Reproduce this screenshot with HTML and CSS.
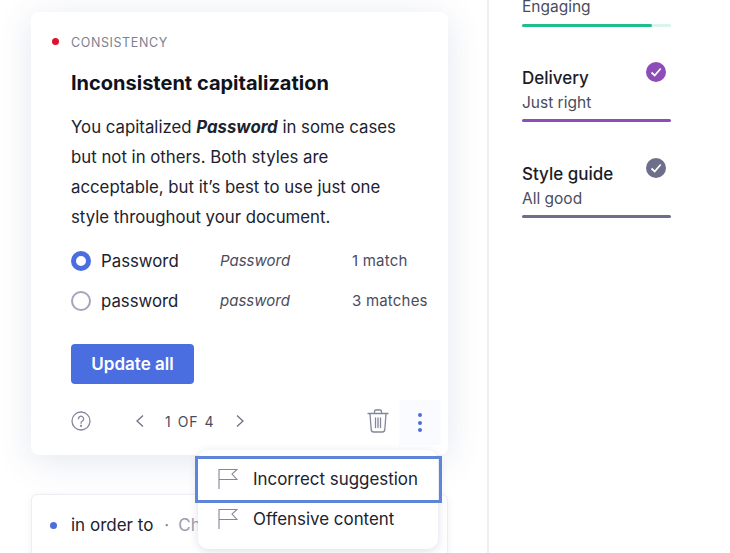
FILE: index.html
```html
<!DOCTYPE html>
<html lang="en">
<head>
<meta charset="utf-8">
<title>Inconsistent capitalization</title>
<link rel="stylesheet" href="styles.css">
</head>
<body>
<div class="page">
  <main class="feed">
    <section class="card">
      <div class="label"><span class="dot dot-red"></span><span>CONSISTENCY</span></div>
      <h1 class="title">Inconsistent capitalization</h1>
      <p class="body-text">You capitalized <b><i>Password</i></b> in some cases but not in others. Both styles are acceptable, but it’s best to use just one style throughout your document.</p>
      <div class="options">
        <div class="option">
          <span class="radio radio-on"></span><span class="opt-name">Password</span><span class="opt-ex">Password</span><span class="opt-count">1 match</span>
        </div>
        <div class="option">
          <span class="radio"></span><span class="opt-name">password</span><span class="opt-ex">password</span><span class="opt-count">3 matches</span>
        </div>
      </div>
      <button class="update">Update all</button>
      <div class="footer">
        <svg class="help" width="20" height="20" viewBox="0 0 20 20" fill="none" stroke="#85869a" stroke-width="1.3"><circle cx="10" cy="10" r="9"/><path d="M7.4 7.8a2.6 2.6 0 1 1 4 2.2c-.9.6-1.4 1-1.4 2.2" stroke-linecap="round"/><circle cx="10" cy="14.8" r=".5" fill="#85869a"/></svg>
        <svg class="chev-l" width="10" height="14" viewBox="0 0 10 14" fill="none" stroke="#6f7186" stroke-width="1.3"><path d="M8 1.5 2 7l6 5.5"/></svg>
        <span class="pager">1 OF 4</span>
        <svg class="chev-r" width="10" height="14" viewBox="0 0 10 14" fill="none" stroke="#6f7186" stroke-width="1.3"><path d="m2 1.5 6 5.5-6 5.5"/></svg>
        <svg class="trash" width="22" height="24" viewBox="0 0 22 24" fill="none" stroke="#85869a" stroke-width="1.3" stroke-linecap="round"><path d="M1 4.500h20M7.500 4V2.400c0-.8.600-1.400 1.400-1.400h4.200c.8 0 1.400.6 1.400 1.400V4M3 5l1.200 15.600c.1 1.300 1 2.400 2.400 2.400h8.800c1.400 0 2.300-1.100 2.400-2.400L19 5M8.500 9v9.500M11 9v9.500M13.500 9v9.500"/></svg>
        <div class="more"><span></span><span></span><span></span></div>
      </div>
      <div class="menu">
        <div class="menu-item menu-focus">
          <svg width="20" height="22" viewBox="0 0 20 22" fill="none" stroke="#85869a" stroke-width="1.1"><path d="M1 21V1.500h18l-5 4.500 5 5.500H1"/></svg>
          <span>Incorrect suggestion</span>
        </div>
        <div class="menu-item">
          <svg width="20" height="22" viewBox="0 0 20 22" fill="none" stroke="#85869a" stroke-width="1.1"><path d="M1 21V1.500h18l-5 4.500 5 5.500H1"/></svg>
          <span>Offensive content</span>
        </div>
      </div>
    </section>
    <section class="card-small">
      <span class="dot dot-blue"></span><span class="small-word">in order to</span><span class="small-sep">·</span><span class="small-hint">Change the wording</span>
    </section>
  </main>
  <aside class="side">
    <div class="goal goal-first">
      <div class="goal-sub">Engaging</div>
      <div class="bar bar-green"><div class="bar-fill"></div></div>
    </div>
    <div class="goal">
      <div class="goal-head"><span class="goal-title">Delivery</span>
        <svg class="goal-check" width="20" height="20" viewBox="0 0 20 20"><circle cx="10" cy="10" r="10" fill="#8e4cb8"/><path d="m5.500 10.500 3.200 3 6-7" fill="none" stroke="#fff" stroke-width="1.800"/></svg>
      </div>
      <div class="goal-sub">Just right</div>
      <div class="bar bar-purple"></div>
    </div>
    <div class="goal">
      <div class="goal-head"><span class="goal-title">Style guide</span>
        <svg class="goal-check" width="20" height="20" viewBox="0 0 20 20"><circle cx="10" cy="10" r="10" fill="#6d6f8a"/><path d="m5.500 10.500 3.200 3 6-7" fill="none" stroke="#fff" stroke-width="1.800"/></svg>
      </div>
      <div class="goal-sub">All good</div>
      <div class="bar bar-gray"></div>
    </div>
  </aside>
</div>
</body>
</html>
```

FILE: styles.css
```css
* { box-sizing: border-box; }
html, body { margin: 0; padding: 0; background: #fff; }
body { font-family: Inter, "Liberation Sans", sans-serif; color: #1a1c29; }
.page { display: flex; width: 730px; height: 553px; overflow: hidden; }
.feed { width: 487px; flex: none; padding: 12px 0 0 31px; background: #fff; }
.card {
  position: relative;
  width: 417px;
  height: 443px;
  padding: 21px 0 0 40px;
  background: #fff;
  border-radius: 8px;
  box-shadow: 0 6px 36px rgba(70, 85, 140, .14);
}
.label { display: flex; align-items: center; height: 18px; font-size: 12.500px; letter-spacing: .6px; color: #7d7f92; position: relative; }
.dot { display: block; width: 7px; height: 7px; border-radius: 50%; }
.dot-red { background: #e0102f; position: absolute; left: -19px; top: 5px; }
.title { margin: 19px 0 0; font-size: 20px; line-height: 26px; font-weight: 700; color: #10121c; }
.body-text { margin: 16px 0 0; width: 345px; font-size: 16.800px; line-height: 30px; color: #202230; }
.options { margin-top: 14px; display: flex; flex-direction: column; gap: 10px; }
.option { display: flex; align-items: center; height: 30px; }
.radio { width: 20px; height: 20px; border-radius: 50%; border: 2px solid #a3a5bc; flex: none; }
.radio-on { border: 5px solid #4a6ee0; }
.opt-name { margin-left: 10px; width: 119px; font-size: 16.800px; color: #202230; }
.opt-ex { width: 132px; font-size: 15px; font-style: italic; color: #4a4c5e; margin-top: -1px; }
.opt-count { font-size: 15px; color: #4a4c5e; letter-spacing: .2px; white-space: nowrap; margin-top: -1px; }
.update {
  display: block; margin-top: 28px; width: 123px; height: 40px;
  border: 0; border-radius: 4px; background: #4a6ee0; color: #fff;
  font: 600 17px Inter, sans-serif;
}
.footer { position: relative; display: flex; align-items: center; height: 45px; margin-top: 16px; }
.help { flex: none; margin-top: -4px; }
.chev-l { margin-left: 44px; flex: none; margin-top: -4px; }
.pager { margin-left: 20px; font-size: 14px; letter-spacing: 1px; color: #4a4c5e; word-spacing: 1px; margin-top: -3px; }
.chev-r { margin-left: 20px; flex: none; margin-top: -4px; }
.trash { margin-left: auto; flex: none; margin-top: -4px; }
.more {
  margin: 0 7px 0 10px; width: 42px; height: 45px; flex: none;
  background: #fafbfe; display: flex; flex-direction: column; align-items: center; justify-content: center; gap: 3.500px;
}
.more span { display: block; width: 4px; height: 4px; border-radius: 50%; background: #4a6ee0; }
.menu {
  position: absolute; z-index: 2; left: 167px; top: 438px; width: 240px; height: 99px;
  background: #fff; border-radius: 10px; box-shadow: 0 2px 10px rgba(70, 85, 140, .18);
  padding-top: 9px;
}
.menu-item { position: relative; display: flex; align-items: center; gap: 15px; height: 40px; padding-left: 20px; font-size: 16.900px; color: #202230; white-space: nowrap; }
.menu-focus::after { content: ""; position: absolute; left: -3px; right: -4px; top: -3px; bottom: -4px; border: 3px solid #5d86d8; }
.card-small {
  position: relative;
  margin-top: 39px; width: 417px; height: 70px; padding: 0 0 0 18px;
  display: flex; align-items: flex-start; background: #fff; border-radius: 6px;
  border: 1px solid #eceef3; box-shadow: 0 2px 8px rgba(70, 85, 140, .08);
  overflow: hidden; white-space: nowrap; font-size: 17px; line-height: 60px;
}
.dot-blue { background: #4a6ee0; margin: 27px 14px 0 0; }
.small-word { color: #202230; }
.small-sep { margin: 0 9px 0 11px; color: #85869a; }
.small-hint { color: #9a9cad; }
.side { flex: 1; border-left: 2px solid #efeff2; padding-left: 33px; }
.goal { width: 149px; margin-bottom: 38px; }
.goal-first { margin-top: -5px; margin-bottom: 37px; }
.goal-head { display: flex; justify-content: space-between; align-items: flex-start; height: 27px; }
.goal-title { font-size: 17px; font-weight: 500; line-height: 26px; margin-top: 1px; color: #1a1c29; }
.goal-check { margin: -2px 5px 0 0; }
.goal-sub { font-size: 15.500px; line-height: 24px; color: #4a4c5e; }
.bar { height: 3px; margin-top: 4px; border-radius: 2px; }
.goal-first .bar { margin-top: 5px; }
.bar-green { background: #d9f5ec; }
.bar-fill { width: 130px; height: 3px; background: #1fbe90; border-radius: 2px; }
.bar-purple { background: #8e4cb8; }
.bar-gray { background: #6d6f8a; }
```
